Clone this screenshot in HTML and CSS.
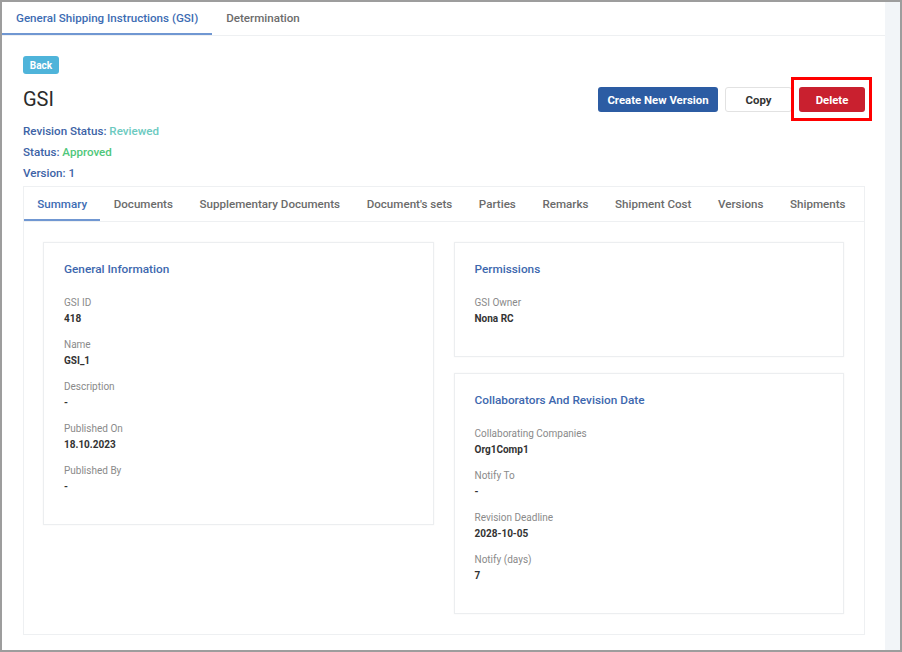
FILE: index.html
```html
<!DOCTYPE html>
<html>
<head>
    <meta charset="UTF-8">
    <title>GSI</title>
    <link rel="stylesheet" href="styles.css">
</head>
<body>
    <div class="frame">
        <div class="main">
            <div class="top-nav">
                <div class="top-tab active">General Shipping Instructions (GSI)</div>
                <div class="top-tab">Determination</div>
            </div>

            <div class="content">
                <button class="btn-back">Back</button>

                <div class="header-row">
                    <h1 class="page-title">GSI</h1>
                    <div class="actions">
                        <button class="btn btn-primary">Create New Version</button>
                        <button class="btn btn-light">Copy</button>
                        <button class="btn btn-danger highlighted">Delete</button>
                    </div>
                </div>

                <div class="meta">
                    <div>Revision Status: <span class="reviewed">Reviewed</span></div>
                    <div>Status: <span class="approved">Approved</span></div>
                    <div>Version: 1</div>
                </div>

                <div class="tab-card">
                    <div class="tabs">
                        <div class="tab active">Summary</div>
                        <div class="tab">Documents</div>
                        <div class="tab">Supplementary Documents</div>
                        <div class="tab">Document's sets</div>
                        <div class="tab">Parties</div>
                        <div class="tab">Remarks</div>
                        <div class="tab">Shipment Cost</div>
                        <div class="tab">Versions</div>
                        <div class="tab">Shipments</div>
                    </div>

                    <div class="tab-body">
                        <div class="column">
                            <div class="card">
                                <div class="card-title">General Information</div>
                                <div class="field"><div class="label">GSI ID</div><div class="value">418</div></div>
                                <div class="field"><div class="label">Name</div><div class="value">GSI_1</div></div>
                                <div class="field"><div class="label">Description</div><div class="value">-</div></div>
                                <div class="field"><div class="label">Published On</div><div class="value">18.10.2023</div></div>
                                <div class="field"><div class="label">Published By</div><div class="value">-</div></div>
                            </div>
                        </div>
                        <div class="column">
                            <div class="card">
                                <div class="card-title">Permissions</div>
                                <div class="field"><div class="label">GSI Owner</div><div class="value">Nona RC</div></div>
                            </div>
                            <div class="card">
                                <div class="card-title">Collaborators And Revision Date</div>
                                <div class="field"><div class="label">Collaborating Companies</div><div class="value">Org1Comp1</div></div>
                                <div class="field"><div class="label">Notify To</div><div class="value">-</div></div>
                                <div class="field"><div class="label">Revision Deadline</div><div class="value">2028-10-05</div></div>
                                <div class="field"><div class="label">Notify (days)</div><div class="value">7</div></div>
                            </div>
                        </div>
                    </div>
                </div>
            </div>
        </div>
        <div class="scroll-strip"></div>
    </div>
</body>
</html>
```

FILE: styles.css
```css
* {
    box-sizing: border-box;
}

body {
    margin: 0;
    padding: 0;
    font-family: Roboto, 'Liberation Sans', Arial, sans-serif;
    color: #333;
    background: #fff;
}

.frame {
    width: 902px;
    height: 652px;
    border: 2px solid #9d9d9d;
    display: flex;
    overflow: hidden;
}

.main {
    flex: 1;
    min-width: 0;
}

.scroll-strip {
    width: 15px;
    background: #f2f5f8;
}

/* top navigation */
.top-nav {
    display: flex;
    height: 34px;
    border-bottom: 1px solid #eef0f2;
}

.top-tab {
    padding: 0 14px;
    font-size: 11.6px;
    font-weight: 500;
    line-height: 32px;
    white-space: nowrap;
    color: #6b6b6b;
    border-bottom: 2px solid transparent;
}

.top-tab.active {
    color: #3d6cb3;
    border-bottom-color: #7097d2;
}

.content {
    padding: 20px 20px 0 21px;
}

.btn-back {
    display: block;
    border: none;
    background: #4fb4da;
    color: #fff;
    font-family: inherit;
    font-size: 10px;
    font-weight: 700;
    height: 18px;
    width: 36px;
    padding: 0;
    border-radius: 3px;
}

.header-row {
    display: flex;
    justify-content: space-between;
    align-items: center;
    margin-top: 13px;
}

.page-title {
    margin: 0;
    font-size: 20px;
    font-weight: 400;
    color: #2b2b2b;
    line-height: 25px;
}

.actions {
    display: flex;
    gap: 7px;
}

.btn {
    height: 25px;
    padding: 0;
    font-family: inherit;
    font-size: 11.4px;
    font-weight: 700;
    white-space: nowrap;
    border-radius: 3px;
    border: 1px solid transparent;
}

.btn-primary {
    background: #2c5ca3;
    color: #fff;
    width: 120px;
}

.btn-light {
    background: #fff;
    color: #333;
    border-color: #e2e2e2;
    width: 67px;
}

.btn-danger {
    background: #c9202f;
    color: #fff;
    width: 66px;
}

.highlighted {
    position: relative;
}

.highlighted::after {
    content: '';
    position: absolute;
    top: -11px;
    bottom: -10px;
    left: -9px;
    right: -8px;
    border: 3px solid #f00;
}

.meta {
    margin-top: 9px;
    font-size: 11.6px;
    font-weight: 500;
    color: #3d63a6;
    line-height: 21px;
}

.reviewed {
    color: #6ccac0;
}

.approved {
    color: #4fc77b;
}

/* summary tabs */
.tab-card {
    margin-top: 2px;
    border: 1px solid #eef0f2;
}

.tabs {
    display: flex;
    height: 35px;
    border-bottom: 1px solid #eef0f2;
}

.tab {
    padding: 0 13.3px;
    font-size: 11.6px;
    font-weight: 500;
    line-height: 34px;
    white-space: nowrap;
    color: #6b6b6b;
    border-bottom: 2px solid transparent;
}

.tab.active {
    color: #3d6cb3;
    border-bottom-color: #7097d2;
}

.tab-body {
    display: flex;
    gap: 20px;
    padding: 20px 20px 20px 19px;
}

.column {
    flex: 1;
    display: flex;
    flex-direction: column;
    gap: 16px;
}

.card {
    border: 1px solid #eceef0;
    box-shadow: 0 0 2px rgba(0, 0, 0, 0.04);
    padding: 19px 20px 18px;
}

.card-title {
    font-size: 11.8px;
    font-weight: 500;
    color: #3d67ae;
    line-height: 15px;
    margin-bottom: 19px;
}

.field {
    margin-bottom: 12px;
}

.label {
    font-size: 10px;
    color: #8a8a8a;
    line-height: 14px;
}

.value {
    font-size: 10px;
    font-weight: 700;
    color: #333;
    line-height: 14px;
    margin-top: 2px;
}
```
